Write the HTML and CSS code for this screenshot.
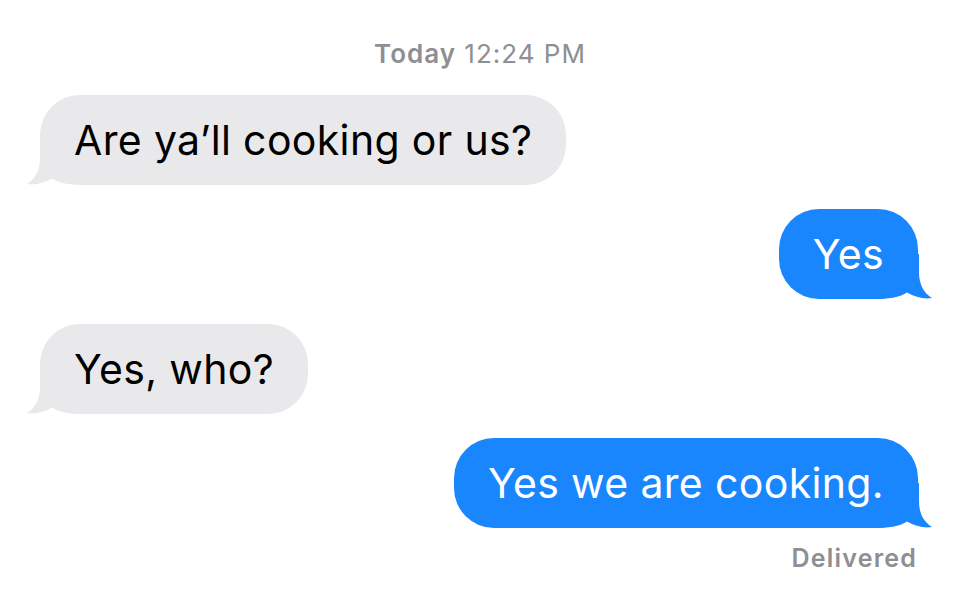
FILE: index.html
```html
<!DOCTYPE html>
<html lang="en">
<head>
<meta charset="utf-8">
<title>Messages</title>
<link rel="stylesheet" href="styles.css">
</head>
<body>
<main class="thread">
  <div class="stamp"><b>Today</b> 12:24 PM</div>
  <div class="messages">
    <div class="row them">
      <div class="bubble gray"><svg class="tail" width="60" height="45" viewBox="0 0 60 45"><path d="M14 0 L14 18 C14 31 9 39 1 44 C9 45.5 18 43 26 38.5 C34 43.5 44 45 60 45 L60 0 Z"/></svg><span class="text">Are ya’ll cooking or us?</span></div>
    </div>
    <div class="row me">
      <div class="bubble blue"><svg class="tail" width="60" height="45" viewBox="0 0 60 45"><path d="M14 0 L14 18 C14 31 9 39 1 44 C9 45.5 18 43 26 38.5 C34 43.5 44 45 60 45 L60 0 Z"/></svg><span class="text">Yes</span></div>
    </div>
    <div class="row them">
      <div class="bubble gray"><svg class="tail" width="60" height="45" viewBox="0 0 60 45"><path d="M14 0 L14 18 C14 31 9 39 1 44 C9 45.5 18 43 26 38.5 C34 43.5 44 45 60 45 L60 0 Z"/></svg><span class="text">Yes, who?</span></div>
    </div>
    <div class="row me">
      <div class="bubble blue"><svg class="tail" width="60" height="45" viewBox="0 0 60 45"><path d="M14 0 L14 18 C14 31 9 39 1 44 C9 45.5 18 43 26 38.5 C34 43.5 44 45 60 45 L60 0 Z"/></svg><span class="text">Yes we are cooking.</span></div>
    </div>
  </div>
  <div class="status">Delivered</div>
</main>
</body>
</html>
```
FILE: styles.css
```css
html, body {
  margin: 0;
  padding: 0;
  background: #ffffff;
}

body {
  width: 960px;
  height: 606px;
  overflow: hidden;
  font-family: "Inter", "Liberation Sans", "Noto Sans", sans-serif;
}

.thread {
  display: flex;
  flex-direction: column;
  padding: 39px 42px 0 40px;
}

.stamp {
  align-self: center;
  height: 30px;
  line-height: 30px;
  font-size: 26px;
  color: #8e8e93;
  letter-spacing: 1px;
  margin-left: 2px;
}

.stamp b {
  font-weight: 600;
}

.messages {
  display: flex;
  flex-direction: column;
  gap: 24.4px;
  margin-top: 26px;
}

.row {
  display: flex;
}

.row.them {
  justify-content: flex-start;
}

.row.me {
  justify-content: flex-end;
}

.bubble {
  position: relative;
  height: 90px;
  display: flex;
  align-items: center;
  padding: 0 34px 0 34px;
  border-radius: 40px;
  font-size: 41px;
  letter-spacing: 0.35px;
  white-space: nowrap;
}

.bubble .text {
  position: relative;
}

.bubble.gray {
  background: #e9e9eb;
  color: #000000;
}

.bubble.blue {
  background: #1a86fd;
  color: #ffffff;
}

.tail {
  position: absolute;
  bottom: 0;
}

.gray .tail {
  left: -14px;
  fill: #e9e9eb;
}

.blue .tail {
  right: -15px;
  fill: #1a86fd;
  transform: scaleX(-1);
}

.status {
  align-self: flex-end;
  margin-top: 15px;
  height: 30px;
  line-height: 30px;
  font-size: 25px;
  font-weight: 600;
  color: #8e8e93;
  letter-spacing: 1.2px;
  margin-right: 1px;
}
```
